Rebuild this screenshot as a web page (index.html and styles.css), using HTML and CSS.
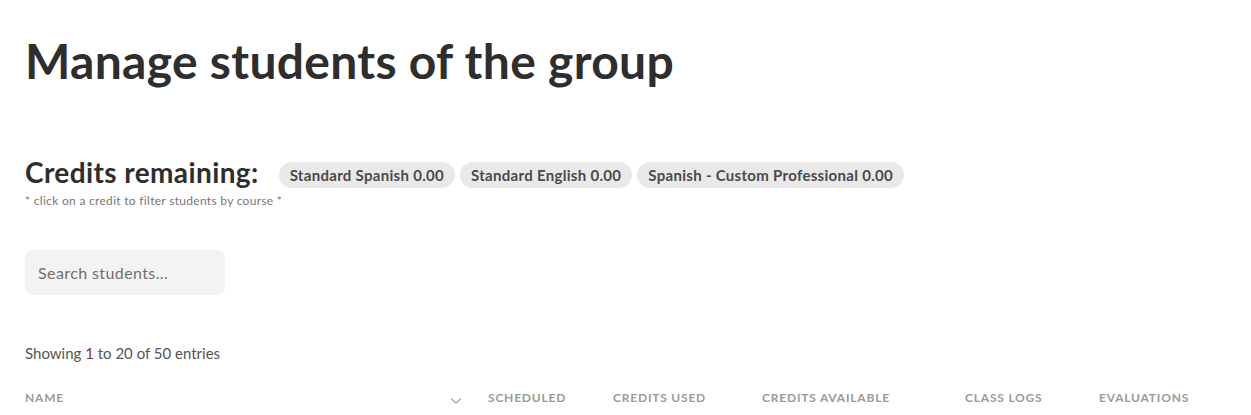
FILE: index.html
```html
<!DOCTYPE html>
<html lang="en">
<head>
<meta charset="utf-8">
<title>Manage students of the group</title>
<link rel="stylesheet" href="styles.css">
</head>
<body>
<main class="page">
  <h1 class="title">Manage students of the group</h1>

  <section class="credits">
    <div class="credits-row">
      <h2 class="credits-title">Credits remaining:</h2>
      <div class="pills">
        <button class="pill">Standard Spanish 0.00</button>
        <button class="pill">Standard English 0.00</button>
        <button class="pill">Spanish - Custom Professional 0.00</button>
      </div>
    </div>
    <p class="note">* click on a credit to filter students by course *</p>
  </section>

  <div class="search">
    <input class="search-input" type="text" placeholder="Search students...">
  </div>

  <p class="showing">Showing <span class="num">1</span> to 20 of 50 entries</p>

  <div class="thead">
    <div class="th th-name">
      <span>Name</span>
      <svg class="chev" width="12" height="8" viewBox="0 0 12 8"><path d="M1 1.5 L6 6 L11 1.5" fill="none" stroke="#a8a8a8" stroke-width="1.4"/></svg>
    </div>
    <div class="th">Scheduled</div>
    <div class="th">Credits used</div>
    <div class="th">Credits available</div>
    <div class="th">Class logs</div>
    <div class="th">Evaluations</div>
  </div>
</main>
</body>
</html>
```

FILE: styles.css
```css
* { box-sizing: border-box; }
html, body { margin: 0; padding: 0; background: #fff; }
body {
  font-family: "Lato", "Liberation Sans", sans-serif;
  color: #333;
}
.page {
  padding: 28px 25px 0 25px;
}
.title {
  margin: 0;
  font-size: 48px;
  line-height: 66px;
  font-weight: 700;
  letter-spacing: 0.3px;
  color: #2e2e2e;
}
.credits {
  margin-top: 62px;
}
.credits-row {
  display: flex;
  align-items: center;
  gap: 20px;
}
.credits-title {
  margin: 0;
  font-size: 28px;
  line-height: 32px;
  font-weight: 700;
  letter-spacing: 0.4px;
  color: #2e2e2e;
}
.pills {
  display: flex;
  gap: 5px;
  margin-top: 6px;
}
.pill {
  font-family: inherit;
  border: 0;
  background: #e9e9e9;
  color: #4a4a4a;
  font-size: 15px;
  font-weight: 700;
  letter-spacing: 0.3px;
  height: 26px;
  padding: 0 11px;
  border-radius: 13px;
}
.note {
  margin: 5px 0 0 0;
  font-size: 12px;
  letter-spacing: 0.3px;
  color: #777;
}
.search {
  margin-top: 42px;
}
.search-input {
  width: 200px;
  height: 45px;
  border: 0;
  background: #f3f3f3;
  border-radius: 8px;
  padding: 0 13px;
  font-family: inherit;
  font-size: 16px;
  letter-spacing: 0.4px;
  color: #444;
}
.search-input::placeholder { color: #6f6f6f; }
.showing {
  margin: 49px 0 0 0;
  font-size: 15px;
  color: #555;
}
.num { color: #8a3030; }
.thead {
  margin-top: 28px;
  display: grid;
  grid-template-columns: 463px 125px 149px 203px 134px 1fr;
  align-items: center;
}
.th {
  font-size: 12px;
  font-weight: 700;
  letter-spacing: 0.8px;
  text-transform: uppercase;
  color: #9a9a9a;
}
.th-name {
  display: flex;
  justify-content: space-between;
  align-items: center;
  padding-right: 26px;
}
.chev { margin-top: 6px; }
```
